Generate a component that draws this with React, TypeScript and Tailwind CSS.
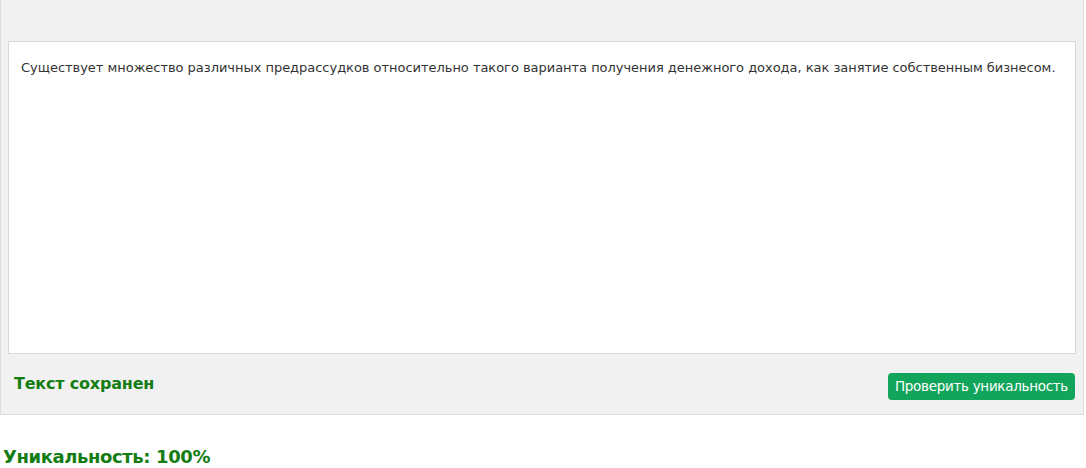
export default function App() {
  return (
    <div className="w-[1086px] h-[468px] bg-white" style={{ fontFamily: '"DejaVu Sans", Verdana, sans-serif' }}>
      <div className="w-[1084px] h-[415px] bg-[#f1f1f1] border-x border-b border-[#dcdcdc] pt-[41px] px-[7px] flex flex-col">
        <div className="h-[313px] bg-white border border-[#d9d9d9] px-[12px] pt-[18px] text-[13px] leading-[16px] text-[#333] whitespace-nowrap tracking-[-0.03px]">
          Существует множество различных предрассудков относительно такого варианта получения денежного дохода, как занятие собственным бизнесом.
        </div>
        <div className="flex items-center justify-between pl-[6px] pt-[18px]">
          <span className="text-[16px] font-bold text-[#137c13] tracking-[-0.2px] pb-[4px]">Текст сохранен</span>
          <button className="h-[27px] w-[187px] mr-[1px] rounded-[4px] bg-[#10a55a] text-white text-[13.5px] leading-[27px] tracking-[-0.3px] text-center">Проверить уникальность</button>
        </div>
      </div>
      <div className="pl-[3px] pt-[31px] text-[18px] font-bold text-[#137c13] leading-[22px] tracking-[-0.4px]">Уникальность: 100%</div>
    </div>
  );
}
